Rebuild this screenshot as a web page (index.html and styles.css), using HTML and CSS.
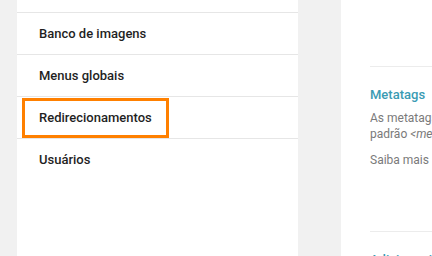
FILE: index.html
```html
<!DOCTYPE html>
<html lang="pt-BR">
<head>
    <meta charset="UTF-8">
    <title>Configurações</title>
    <link rel="stylesheet" href="styles.css">
</head>
<body>
    <div class="page">
        <nav class="sidebar">
            <ul class="menu">
                <li><a href="#">Páginas</a></li>
                <li><a href="#">Banco de imagens</a></li>
                <li><a href="#">Menus globais</a></li>
                <li><a href="#" class="focused">Redirecionamentos</a></li>
                <li><a href="#">Usuários</a></li>
            </ul>
        </nav>

        <main class="content">
            <div class="section section-top"></div>
            <div class="section section-meta">
                <h3>Metatags</h3>
                <p>As metatags ajudam os buscadores a entender o seu site e seguem o<br>padrão <em>&lt;meta&gt;</em> do HTML.</p>
                <p>Saiba mais</p>
            </div>
            <div class="section">
                <h3>Adicionar idioma</h3>
            </div>
        </main>
    </div>
</body>
</html>
```

FILE: styles.css
```css
body {
    margin: 0;
    background-color: #f1f1f1;
    font-family: Roboto, "Noto Sans", sans-serif;
    overflow: hidden;
}
.page {
    display: flex;
    height: 256px;
    padding-left: 17px;
}
.sidebar {
    width: 281px;
    flex-shrink: 0;
    background-color: white;
    overflow: hidden;
}
.menu {
    list-style: none;
    margin: -29px 0 0 0;
    padding: 0;
}
.menu li {
    height: 41px;
    border-top: 1px solid #e6e6e6;
    display: flex;
    align-items: center;
}
.menu li:first-child {
    border-top: none;
}
.menu a {
    display: inline-block;
    margin-left: 5px;
    padding: 0 14px;
    line-height: 34px;
    border: 3px solid transparent;
    color: #1f1f1f;
    font-size: 13px;
    font-weight: 500;
    text-decoration: none;
}
.menu a.focused {
    border-color: #ff8000;
}
.content {
    flex: 1;
    margin-left: 43px;
    background-color: white;
    min-width: 0;
    overflow: hidden;
}
.section {
    margin-left: 29px;
    border-top: 1px solid #ececec;
    padding-top: 19px;
}
.section-top {
    border-top: none;
    border-bottom: 1px solid #ececec;
    height: 66px;
    padding: 0;
}
.section-top + .section {
    border-top: none;
}
.section-meta {
    height: 164px;
    box-sizing: border-box;
}
.section h3 {
    margin: 0 0 6px 0;
    color: #3a9bb3;
    font-size: 13px;
    font-weight: 500;
    line-height: 18px;
    white-space: nowrap;
}
.section p {
    margin: 0 0 10px 0;
    color: #7a7a7a;
    font-size: 12px;
    line-height: 16px;
    white-space: nowrap;
}
```
